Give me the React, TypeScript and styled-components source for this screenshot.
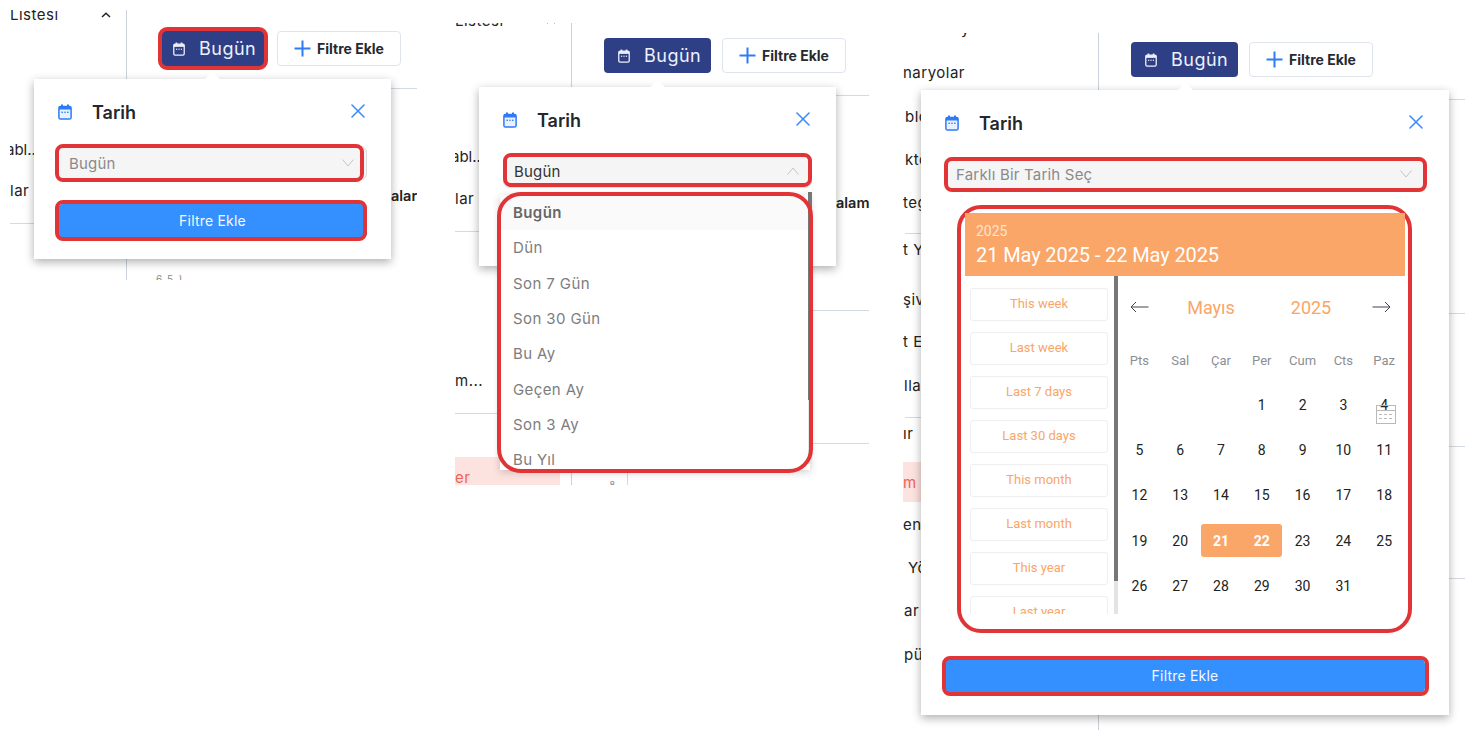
import { ReactNode } from "react";
import styled, { createGlobalStyle } from "styled-components";
import { X } from "lucide-react";

const UI_FONT = `Inter, "Noto Sans", sans-serif`;
const CAL_FONT = `Roboto, "Liberation Sans", sans-serif`;
const ORANGE = "#f9a668";
const RED = "#e13436";
const LINE = "#d3dae4";

const GlobalStyle = createGlobalStyle`
  html, body {
    margin: 0;
    background: #fff;
    font-family: ${UI_FONT};
  }
  * { box-sizing: border-box; }
`;

const Page = styled.div`
  width: 1473px;
  height: 741px;
  overflow: hidden;
  display: flex;
  align-items: flex-start;
`;

const Shot = styled.section<{ $left: number; $top: number; $width: number; $height: number; $side: number }>`
  position: relative;
  flex: none;
  width: ${(p) => p.$width}px;
  height: ${(p) => p.$height}px;
  margin: ${(p) => p.$top}px 0 0 ${(p) => p.$left}px;
  overflow: hidden;
  display: grid;
  grid-template-columns: ${(p) => p.$side}px 1fr;
`;

const Side = styled.div`
  min-width: 0;
  overflow: hidden;
  display: flex;
  flex-direction: column;
`;

const SideItem = styled.div<{ $gap: number; $indent?: number; $tight?: boolean }>`
  flex: none;
  height: 20px;
  margin-top: ${(p) => p.$gap}px;
  margin-left: ${(p) => p.$indent ?? 0}px;
  padding-right: 15px;
  display: flex;
  justify-content: space-between;
  align-items: center;
  font-size: 15px;
  letter-spacing: ${(p) => (p.$tight ? 0 : 0.5)}px;
  line-height: 20px;
  color: #222;
  white-space: nowrap;
`;

const SideRule = styled.div<{ $gap: number; $indent?: number }>`
  flex: none;
  height: 1px;
  margin-top: ${(p) => p.$gap}px;
  margin-left: ${(p) => p.$indent ?? 0}px;
  background: ${LINE};
`;

const ActiveItem = styled.div<{ $gap: number; $width: number; $height: number }>`
  flex: none;
  width: ${(p) => p.$width}px;
  height: ${(p) => p.$height}px;
  margin-top: ${(p) => p.$gap}px;
  display: flex;
  align-items: center;
  background: #fde3df;
  color: #f0605a;
  font-size: 15px;
  letter-spacing: 0.5px;
`;

const Main = styled.div`
  min-width: 0;
  overflow: hidden;
  border-left: 1px solid #c9d1dc;
  display: flex;
  flex-direction: column;
`;

const Toolbar = styled.div<{ $top: number }>`
  flex: none;
  display: flex;
  gap: 11px;
  padding: ${(p) => p.$top}px 0 22px 32px;
`;

const DateButton = styled.div`
  position: relative;
  width: 107px;
  height: 35px;
  border-radius: 4px;
  background: #2f3f85;
  color: #eef1fb;
  display: flex;
  align-items: center;
  padding-left: 14px;
  gap: 14px;
  font-size: 18px;
  letter-spacing: 0.5px;
`;

const AddButton = styled.div`
  width: 124px;
  height: 35px;
  border: 1px solid #dfe4ec;
  border-radius: 4px;
  background: #fff;
  display: flex;
  align-items: center;
  padding-left: 16px;
  gap: 6px;
  font-size: 14px;
  font-weight: 700;
  color: #262a30;
  white-space: nowrap;
`;

const MainRule = styled.div<{ $gap?: number }>`
  flex: none;
  height: 1px;
  margin-top: ${(p) => p.$gap ?? 0}px;
  background: ${LINE};
`;

const MainHeading = styled.div`
  flex: none;
  height: 20px;
  margin-top: 97px;
  padding-left: 264px;
  font-size: 14.5px;
  line-height: 20px;
  font-weight: 600;
  color: #222;
  white-space: nowrap;
`;

const TinyValue = styled.div`
  flex: none;
  margin: 67px 0 0 29px;
  font-size: 10px;
  line-height: 12px;
  letter-spacing: 1px;
  color: #888;
`;

const AxisBox = styled.div`
  flex: none;
  width: 56px;
  height: 18px;
  margin-top: 23px;
  border-right: 1px solid ${LINE};
  padding-right: 12px;
  text-align: right;
  font-size: 9px;
  line-height: 16px;
  color: #888;
`;

const AxisText = styled.div`
  margin-top: -6px;
`;

const Ring = styled.span<{ $l: number; $r: number; $t: number; $b: number; $radius?: number }>`
  position: absolute;
  left: ${(p) => p.$l}px;
  right: ${(p) => p.$r}px;
  top: ${(p) => p.$t}px;
  bottom: ${(p) => p.$b}px;
  border: 4px solid ${RED};
  border-radius: ${(p) => p.$radius ?? 8}px;
  pointer-events: none;
  z-index: 3;
`;

const Popover = styled.div<{ $left: number; $top: number; $width: number; $bottom: number }>`
  position: absolute;
  left: ${(p) => p.$left}px;
  top: ${(p) => p.$top}px;
  width: ${(p) => p.$width}px;
  padding: 24px 24px ${(p) => p.$bottom}px;
  background: #fff;
  box-shadow: 0 3px 9px rgba(0, 0, 0, 0.32);
  display: flex;
  flex-direction: column;
  z-index: 2;
  &::before {
    content: "";
    position: absolute;
    left: calc(50% - 5.5px);
    top: -5px;
    width: 11px;
    height: 11px;
    background: #fff;
    transform: rotate(45deg);
  }
`;

const PopHeader = styled.div`
  position: relative;
  height: 18px;
  display: flex;
  align-items: center;
  gap: 20px;
  color: #2f7bf5;
`;

const PopTitle = styled.div`
  font-size: 18px;
  font-weight: 600;
  color: #24272d;
`;

const CloseButton = styled.div`
  margin: -2px -3px 0 auto;
  display: flex;
  color: #3b8cff;
`;

const SelectBox = styled.div<{ $open?: boolean }>`
  position: relative;
  height: 34px;
  margin-top: 25px;
  padding: 0 12px 0 10px;
  display: flex;
  align-items: center;
  justify-content: space-between;
  background: #f5f5f5;
  border: 1px solid ${(p) => (p.$open ? "#cfe4ff" : "#dcdcdc")};
  border-radius: 6px;
  font-size: 15px;
  letter-spacing: 0.2px;
  color: ${(p) => (p.$open ? "#333" : "#8a8a8a")};
`;

const SubmitButton = styled.div<{ $gap: number }>`
  position: relative;
  height: 34px;
  margin-top: ${(p) => p.$gap}px;
  padding-bottom: 2px;
  background: #3490ff;
  border-radius: 5px;
  color: #f4f8ff;
  font-size: 14px;
  letter-spacing: 0.2px;
  display: flex;
  align-items: center;
  justify-content: center;
`;

const DropWrap = styled.div`
  position: absolute;
  left: 21px;
  top: 108px;
  width: 310px;
  height: 275px;
  z-index: 3;
`;

const DropList = styled.div`
  height: 100%;
  overflow: hidden;
  background: #fff;
  box-shadow: 0 2px 8px rgba(0, 0, 0, 0.2);
`;

const DropItem = styled.div<{ $active?: boolean }>`
  height: 35.3px;
  padding-left: 13px;
  display: flex;
  align-items: center;
  font-size: 15px;
  letter-spacing: 0.4px;
  font-weight: ${(p) => (p.$active ? 600 : 400)};
  color: ${(p) => (p.$active ? "#666" : "#7d7d7d")};
  background: ${(p) => (p.$active ? "#fafafa" : "#fff")};
`;

const DropScroll = styled.div`
  position: absolute;
  right: -2px;
  top: -3px;
  width: 4px;
  height: 272px;
  background: #e6e6e6;
  &::before {
    content: "";
    display: block;
    height: 208px;
    background: #777;
  }
`;

const CalendarFrame = styled.div`
  position: relative;
  align-self: center;
  width: 455px;
  margin: 14px 0 0 -1px;
  padding: 4px 3px 15px 4px;
  border: 4px solid ${RED};
  border-radius: 24px;
  font-family: ${CAL_FONT};
`;

const RangeHeader = styled.div`
  height: 63px;
  padding: 8px 11px;
  background: ${ORANGE};
  color: #fff;
`;

const RangeYear = styled.div`
  font-size: 14px;
  line-height: 20px;
  opacity: 0.7;
`;

const RangeText = styled.div`
  font-size: 20px;
  line-height: 28px;
  letter-spacing: -0.1px;
`;

const CalendarBody = styled.div`
  height: 338px;
  display: flex;
  overflow: hidden;
`;

const Presets = styled.div`
  flex: none;
  width: 143px;
  padding: 12px 0 0 5px;
  overflow: hidden;
`;

const Preset = styled.div`
  height: 33px;
  margin-bottom: 11px;
  padding-bottom: 2px;
  border: 1px solid #eee;
  border-radius: 3px;
  display: flex;
  align-items: center;
  justify-content: center;
  font-size: 13px;
  color: ${ORANGE};
`;

const PresetScroll = styled.div`
  flex: none;
  width: 4px;
  margin: 0 1px 0 6px;
  background: #e4e4e4;
  &::before {
    content: "";
    display: block;
    height: 305px;
    background: #777;
  }
`;

const MonthPane = styled.div`
  flex: none;
  width: 287px;
`;

const MonthNav = styled.div`
  height: 62px;
  display: grid;
  grid-template-columns: 41px 102px 98px 42px;
  align-items: center;
  justify-items: center;
  font-size: 18px;
  color: ${ORANGE};
`;

const WeekRow = styled.div`
  height: 44px;
  display: grid;
  grid-template-columns: repeat(7, 40.8px);
  align-items: center;
  justify-items: center;
  font-size: 13px;
  color: #8a8f96;
`;

const DayGrid = styled.div`
  display: grid;
  grid-template-columns: repeat(7, 40.8px);
  grid-auto-rows: 45.3px;
  align-items: center;
`;

const Day = styled.div<{ $start?: boolean; $end?: boolean }>`
  position: relative;
  height: 33px;
  display: flex;
  align-items: center;
  justify-content: center;
  font-size: 14px;
  color: #222;
  ${(p) =>
    (p.$start || p.$end) &&
    `background: ${ORANGE}; color: #fff; font-weight: 700;`}
  border-radius: ${(p) => (p.$start ? "3px 0 0 3px" : p.$end ? "0 3px 3px 0" : "0")};
`;

const DayMark = styled.span`
  position: absolute;
  left: 12px;
  top: 17px;
  display: flex;
`;

const CalendarIcon = ({ fill = "none", width = 14, height = 16 }: { fill?: string; width?: number; height?: number }) => (
  <svg width={width} height={height} viewBox="0 0 14 16" style={{ flex: "none" }}>
    <rect x="3" y="0.5" width="2" height="3" fill="currentColor" />
    <rect x="9" y="0.5" width="2" height="3" fill="currentColor" />
    <rect x="0.9" y="2.4" width="12.2" height="12.7" rx="1.6" fill={fill} stroke="currentColor" strokeWidth="1.5" />
    <rect x="1" y="2.5" width="12" height="3" fill="currentColor" />
    <rect x="3.5" y="7.6" width="1.4" height="1.4" fill="currentColor" />
    <rect x="6.3" y="7.6" width="1.4" height="1.4" fill="currentColor" />
    <rect x="9.1" y="7.6" width="1.4" height="1.4" fill="currentColor" />
  </svg>
);

const PlusIcon = () => (
  <svg width="17" height="17" viewBox="0 0 17 17" style={{ flex: "none" }}>
    <path d="M8.5 0.5v16M0.5 8.5h16" stroke="#2f7bf5" strokeWidth="2" fill="none" />
  </svg>
);

const Chevron = ({ up }: { up?: boolean }) => (
  <svg width="12" height="8" viewBox="0 0 12 8" style={{ flex: "none" }}>
    <path
      d={up ? "M0.5 7.5L6 1L11.5 7.5" : "M0.5 0.5L6 7L11.5 0.5"}
      stroke="#c4c4c4"
      strokeWidth="1"
      fill="none"
    />
  </svg>
);

const SideCaret = () => (
  <svg width="10" height="6" viewBox="0 0 10 6" style={{ flex: "none" }}>
    <path d="M1 5L5 1.2L9 5" stroke="#222" strokeWidth="1.5" fill="none" />
  </svg>
);

const NavArrow = ({ right }: { right?: boolean }) => (
  <svg width="19" height="12" viewBox="0 0 19 12">
    <path
      d={right ? "M0.5 6H18M13 1L18 6L13 11" : "M18.5 6H1M6 1L1 6L6 11"}
      stroke="#3f4650"
      strokeWidth="1"
      fill="none"
    />
  </svg>
);

const SmallCalendar = () => (
  <svg width="20" height="19" viewBox="0 0 20 19">
    <rect x="0.5" y="0.5" width="19" height="18" fill="none" stroke="#b9b9b9" />
    <path d="M0.5 5.5H19.5" stroke="#b9b9b9" />
    <path d="M3 9.5H17M3 13.5H17" stroke="#bbb" strokeDasharray="3 2" />
  </svg>
);

const ToolbarRow = ({ top, ring }: { top: number; ring?: boolean }) => (
  <Toolbar $top={top}>
    <DateButton>
      <CalendarIcon width={12} height={14} />
      Bugün
      {ring && <Ring $l={-1} $r={-2} $t={-4} $b={-4} $radius={9} />}
    </DateButton>
    <AddButton>
      <PlusIcon />
      Filtre Ekle
    </AddButton>
  </Toolbar>
);

const PopHead = () => (
  <PopHeader>
    <CalendarIcon fill="#e8f1ff" />
    <PopTitle>Tarih</PopTitle>
    <CloseButton>
      <X size={24} strokeWidth={1.6} />
    </CloseButton>
  </PopHeader>
);

const dropOptions = ["Bugün", "Dün", "Son 7 Gün", "Son 30 Gün", "Bu Ay", "Geçen Ay", "Son 3 Ay", "Bu Yıl"];
const presetLabels = ["This week", "Last week", "Last 7 days", "Last 30 days", "This month", "Last month", "This year", "Last year"];
const weekDays = ["Pts", "Sal", "Çar", "Per", "Cum", "Cts", "Paz"];
const days: (number | null)[] = [null, null, null, ...Array.from({ length: 31 }, (_, i) => i + 1)];

const SideText = ({ gap, indent, tight, children }: { gap: number; indent?: number; tight?: boolean; children: ReactNode }) => (
  <SideItem $gap={gap} $indent={indent} $tight={tight}>
    <span>{children}</span>
  </SideItem>
);

const DateRangePicker = () => (
  <CalendarFrame>
    <RangeHeader>
      <RangeYear>2025</RangeYear>
      <RangeText>21 May 2025 - 22 May 2025</RangeText>
    </RangeHeader>
    <CalendarBody>
      <Presets>
        {presetLabels.map((label) => (
          <Preset key={label}>{label}</Preset>
        ))}
      </Presets>
      <PresetScroll />
      <MonthPane>
        <MonthNav>
          <NavArrow />
          <span>Mayıs</span>
          <span>2025</span>
          <NavArrow right />
        </MonthNav>
        <WeekRow>
          {weekDays.map((d) => (
            <span key={d}>{d}</span>
          ))}
        </WeekRow>
        <DayGrid>
          {days.map((d, i) => (
            <Day key={i} $start={d === 21} $end={d === 22}>
              {d}
              {d === 4 && (
                <DayMark>
                  <SmallCalendar />
                </DayMark>
              )}
            </Day>
          ))}
        </DayGrid>
      </MonthPane>
    </CalendarBody>
  </CalendarFrame>
);

export default function App() {
  return (
    <Page>
      <GlobalStyle />

      <Shot $left={10} $top={10} $width={407} $height={270} $side={116}>
        <Side>
          <SideItem $gap={-5}>
            <span>Listesi</span>
            <SideCaret />
          </SideItem>
          <SideText gap={115} indent={-4} tight>abl..</SideText>
          <SideText gap={21}>lar</SideText>
          <SideRule $gap={22} />
        </Side>
        <Main>
          <ToolbarRow top={21} ring />
          <MainRule />
          <MainHeading>alar</MainHeading>
          <TinyValue>6 5 ⌉</TinyValue>
        </Main>
        <Popover $left={24} $top={69} $width={357} $bottom={21}>
          <PopHead />
          <SelectBox>
            Bugün
            <Chevron />
            <Ring $l={-4} $r={2} $t={-3} $b={-3} />
          </SelectBox>
          <SubmitButton $gap={24}>
            Filtre Ekle
            <Ring $l={-3} $r={0} $t={-4} $b={-3} />
          </SubmitButton>
        </Popover>
      </Shot>

      <Shot $left={38} $top={23} $width={414} $height={462} $side={116}>
        <Side>
          <SideItem $gap={-12}>
            <span>Listesi</span>
            <SideCaret />
          </SideItem>
          <SideText gap={116} indent={-4} tight>abl..</SideText>
          <SideText gap={22}>lar</SideText>
          <SideRule $gap={22} />
          <SideText gap={139}>m...</SideText>
          <SideRule $gap={22} />
          <ActiveItem $gap={43} $width={105} $height={40}>
            er
          </ActiveItem>
        </Side>
        <Main>
          <ToolbarRow top={15} />
          <MainRule />
          <MainHeading>alam</MainHeading>
          <MainRule $gap={97} />
          <MainRule $gap={132} />
          <AxisBox>
            <AxisText>
              7.5
              <br />8
            </AxisText>
          </AxisBox>
        </Main>
        <Popover $left={24} $top={64} $width={357} $bottom={20}>
          <PopHead />
          <SelectBox $open>
            Bugün
            <Chevron up />
            <Ring $l={-1} $r={-1} $t={-2} $b={0} />
          </SelectBox>
          <SubmitButton $gap={24}>Filtre Ekle</SubmitButton>
          <DropWrap>
            <DropList>
              {dropOptions.map((o, i) => (
                <DropItem key={o} $active={i === 0}>
                  {o}
                </DropItem>
              ))}
            </DropList>
            <DropScroll />
            <Ring $l={-3} $r={-3} $t={-3} $b={-3} $radius={24} />
          </DropWrap>
        </Popover>
      </Shot>

      <Shot $left={34} $top={33} $width={562} $height={697} $side={195}>
        <Side>
          <SideText gap={-14} indent={58}>y</SideText>
          <SideText gap={24}>naryolar</SideText>
          <SideText gap={24} indent={2}>blolar</SideText>
          <SideText gap={23} indent={2}>ktörler</SideText>
          <SideText gap={23}>tegoriler</SideText>
          <SideRule $gap={20} $indent={2} />
          <SideText gap={6}>t Yönetim</SideText>
          <SideText gap={30}>şiv</SideText>
          <SideText gap={22}>t Ekran</SideText>
          <SideText gap={24} indent={1}>llanıcı</SideText>
          <SideRule $gap={21} $indent={2} />
          <SideText gap={6}>ır</SideText>
          <ActiveItem $gap={18} $width={18} $height={40}>
            m
          </ActiveItem>
          <SideText gap={13}>enel</SideText>
          <SideText gap={23} indent={5}>Yönetim</SideText>
          <SideText gap={23} indent={1}>ar</SideText>
          <SideText gap={24} indent={1}>püler</SideText>
        </Side>
        <Main>
          <ToolbarRow top={9} />
          <MainRule />
          <MainRule $gap={213} />
          <MainRule $gap={132} />
          <MainRule $gap={131} />
        </Main>
        <Popover $left={18} $top={57} $width={528} $bottom={22}>
          <PopHead />
          <SelectBox>
            Farklı Bir Tarih Seç
            <Chevron />
            <Ring $l={-2} $r={-3} $t={-1} $b={-2} />
          </SelectBox>
          <DateRangePicker />
          <SubmitButton $gap={26}>
            Filtre Ekle
            <Ring $l={-3} $r={-4} $t={-3} $b={-3} />
          </SubmitButton>
        </Popover>
      </Shot>
    </Page>
  );
}
